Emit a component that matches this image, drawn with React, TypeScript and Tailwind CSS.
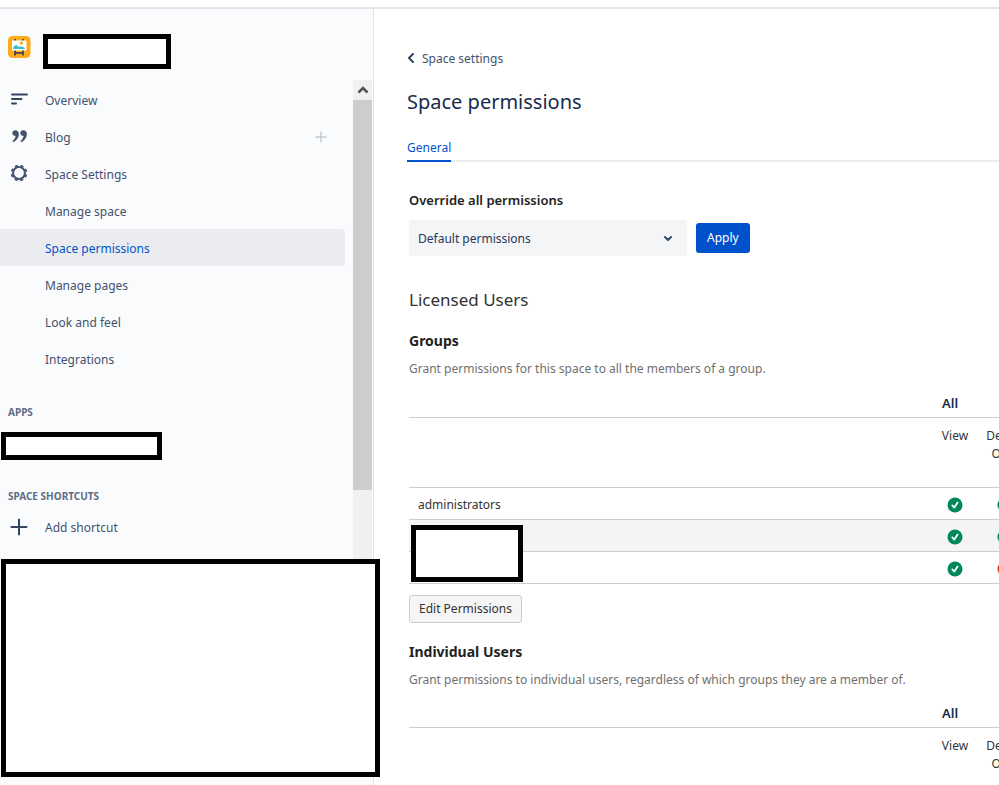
import type { ReactNode } from "react";

const ALL_PERMISSIONS = ["View", "Delete Own"];

type Group = { name: string; grants: boolean[] };

const GROUPS: Group[] = [
  { name: "administrators", grants: [true, true] },
  { name: "", grants: [true, true] },
  { name: "", grants: [true, false] },
];

const SETTINGS_LINKS = [
  { label: "Manage space", active: false },
  { label: "Space permissions", active: true },
  { label: "Manage pages", active: false },
  { label: "Look and feel", active: false },
  { label: "Integrations", active: false },
];

function SpaceLogo() {
  return (
    <svg viewBox="0 0 24 24" className="size-6 shrink-0" aria-hidden="true">
      <rect x="1" y="0" width="22.500" height="22" rx="4.500" fill="#ffab1a" />
      <path d="M8 3v3M16 3v3M8 14v5.500M16 14v5.500M8 17h8" stroke="#253858" strokeWidth="1.500" />
      <rect x="5" y="4.500" width="14.500" height="10" rx="0.500" fill="#fff" />
      <path d="M6 13c0-2 1.500-3.500 3-4 1.200.2 2 1 2.500 2 1-.8 2-1 3-.3 1.500-.2 3 .5 3.500 2.300z" fill="#3cc0c9" />
      <circle cx="14.500" cy="7" r="1.500" fill="#ff991f" />
    </svg>
  );
}

function OverviewIcon() {
  return (
    <svg viewBox="0 0 18 18" className="size-[18px]" fill="none" stroke="#344563" strokeWidth="2" strokeLinecap="round" aria-hidden="true">
      <path d="M2 3.500h15M2 8h9.500M2 12.500h4" />
    </svg>
  );
}

function QuoteIcon() {
  return (
    <svg viewBox="0 0 18 18" className="size-[18px]" fill="#42526e" aria-hidden="true">
      <path d="M5.300 2.300C3.400 2.300 2.300 3.500 2.300 5.100s1.100 2.800 2.600 2.800c.3 0 .5 0 .7-.1-.2 2-1.200 3.700-2.900 5-.6.600.2 1.500.9 1.100C7 12.300 8.900 9.500 8.900 6.100 8.900 3.700 7.300 2.300 5.300 2.300z" />
      <path d="M13.300 2.300c-1.900 0-3 1.200-3 2.800s1.100 2.800 2.600 2.800c.3 0 .5 0 .7-.1-.2 2-1.200 3.700-2.900 5-.6.600.2 1.500.9 1.100C15 12.300 16.900 9.500 16.900 6.100 16.900 3.700 15.300 2.300 13.300 2.300z" />
    </svg>
  );
}

function GearIcon() {
  return (
    <svg viewBox="0 1 18 18" className="size-[18px]" fill="none" stroke="#42526e" aria-hidden="true">
      <circle cx="9" cy="9" r="5.900" strokeWidth="2" />
      <circle cx="9" cy="9" r="7.400" strokeWidth="1.800" strokeDasharray="3.100 2.712" strokeDashoffset="-1.360" />
    </svg>
  );
}

function PlusIcon({ className }: { className: string }) {
  return (
    <svg viewBox="0 0 18 18" className={className} fill="none" stroke="currentColor" strokeWidth="2" strokeLinecap="round" aria-hidden="true">
      <path d="M9 1.500v15M1.500 9h15" />
    </svg>
  );
}

function StatusIcon({ granted }: { granted: boolean }) {
  return (
    <svg viewBox="0 0 16 16" className="mx-auto block size-4" role="img" aria-label={granted ? "Granted" : "Denied"}>
      <circle cx="8" cy="8" r="7.500" fill={granted ? "#00875a" : "#de350b"} />
      <path
        d={granted ? "M5.300 8.400l2 2.200 3.300-5" : "M5.500 5.500l5 5M10.500 5.500l-5 5"}
        fill="none"
        stroke="#fff"
        strokeWidth="1.800"
        strokeLinecap="round"
        strokeLinejoin="round"
      />
    </svg>
  );
}

function NavItem({ icon, label, active = false, action }: { icon?: ReactNode; label: string; active?: boolean; action?: ReactNode }) {
  return (
    <li className={active ? "flex h-[37px] items-center rounded-r-[3px] bg-[#ebecf0] pr-4" : "flex h-[37px] items-center pr-4"}>
      <a href="#" className={active ? "flex flex-1 items-center text-[#0052cc]" : "flex flex-1 items-center text-[#42526e]"}>
        <span className="w-[45px] pl-[10px]">{icon}</span>
        <span className="pt-[2px]">{label}</span>
      </a>
      {action}
    </li>
  );
}

function Scrollbar() {
  return (
    <div className="mr-px flex w-[19px] shrink-0 flex-col bg-[#f0f0f0]" aria-hidden="true">
      <div className="flex h-5 items-center justify-center">
        <svg viewBox="0 0 12 8" className="h-2 w-3" fill="none" stroke="#505050" strokeWidth="2.500">
          <path d="M1.500 6.500L6 2l4.500 4.500" />
        </svg>
      </div>
      <div className="h-[390px] bg-[#cdcdcd]" />
    </div>
  );
}

function Sidebar() {
  return (
    <aside className="relative flex w-[374px] shrink-0 flex-col border-r border-[#e3e4e8] bg-[#fafbfd]">
      <header className="flex h-[71px] shrink-0 gap-3 pt-[25px] pl-[7px]">
        <span className="pt-[2px]">
          <SpaceLogo />
        </span>
        <div className="h-[35px] w-[128px] border-5 border-black bg-white" />
      </header>
      <div className="flex min-h-0 flex-1 pb-5">
        <nav className="mr-2 flex-1 text-[12px]" aria-label="Space">
          <ul className="pt-px">
            <NavItem icon={<OverviewIcon />} label="Overview" />
            <NavItem
              icon={<QuoteIcon />}
              label="Blog"
              action={
                <button type="button" aria-label="Create blog post" className="p-[2px] text-[#c1c7d0]">
                  <PlusIcon className="size-3" />
                </button>
              }
            />
            <NavItem icon={<GearIcon />} label="Space Settings" />
            {SETTINGS_LINKS.map((link) => (
              <NavItem key={link.label} label={link.label} active={link.active} />
            ))}
          </ul>
          <h2 className="mt-[27px] pl-2 text-[10px] leading-4 font-bold text-[#5e6c84]">APPS</h2>
          <div className="mt-3 ml-px h-7 w-[161px] border-5 border-black bg-white" />
          <h2 className="mt-7 pl-2 text-[10px] leading-4 font-bold text-[#5e6c84]">SPACE SHORTCUTS</h2>
          <ul className="mt-1">
            <NavItem icon={<PlusIcon className="size-[18px] text-[#344563]" />} label="Add shortcut" />
          </ul>
        </nav>
        <Scrollbar />
      </div>
      <div className="absolute top-[550px] left-px z-10 h-[218px] w-[379px] border-5 border-black bg-white" />
    </aside>
  );
}

function PermissionTable({ label, groups }: { label: string; groups: Group[] }) {
  return (
    <table className="w-[622px] table-fixed border-collapse text-[12px] leading-[18px] text-[#333]" aria-label={label}>
      <colgroup>
        <col className="w-[523px]" />
        <col className="w-[46px]" />
        <col className="w-[53px]" />
      </colgroup>
      <thead>
        <tr className="h-[30px] border-b border-[#ccc]">
          <td />
          <th colSpan={2} scope="colgroup" className="pt-[2px] pl-[10px] text-left text-[13px] font-semibold text-[#172b4d]">
            All
          </th>
        </tr>
        <tr className="h-[70px] border-b border-[#ccc] align-top">
          <td />
          {ALL_PERMISSIONS.map((permission) => (
            <th key={permission} scope="col" className="pt-[9px] text-center font-normal">
              {permission}
            </th>
          ))}
        </tr>
      </thead>
      <tbody>
        {groups.map((group, index) => (
          <tr key={index} className="h-[32px] border-b border-[#ccc] even:bg-[#f4f4f4]">
            <td className="pt-[3px] pl-[9px]">{group.name}</td>
            {group.grants.map((granted, column) => (
              <td key={column} className="pt-1">
                <StatusIcon granted={granted} />
              </td>
            ))}
          </tr>
        ))}
      </tbody>
    </table>
  );
}

export default function App() {
  return (
    <div className="flex h-screen flex-col overflow-hidden bg-white font-['Noto_Sans',sans-serif] text-[12px]">
      <div className="z-10 h-[9px] shrink-0 border-b-2 border-[#e3e5ea] bg-white" />
      <div className="flex min-h-0 flex-1">
        <Sidebar />
        <main className="min-w-0 flex-1 overflow-hidden pt-[41px] pl-[33px]">
          <a href="#" className="flex items-center gap-[6px] leading-[18px] text-[#42526e]">
            <svg viewBox="0 0 9 12" className="h-3 w-[9px]" fill="none" stroke="#344563" strokeWidth="2" strokeLinecap="round" strokeLinejoin="round" aria-hidden="true">
              <path d="M6 1L2 5l4 4" />
            </svg>
            Space settings
          </a>
          <h1 className="mt-5 text-[20px] leading-7 text-[#172b4d]">Space permissions</h1>
          <div className="mt-5 flex border-b-2 border-[#ebecf0]" role="tablist">
            <button type="button" role="tab" aria-selected="true" className="-mb-[2px] h-[26px] border-b-2 border-[#0052cc] pb-px leading-[18px] text-[#0052cc]">
              General
            </button>
          </div>
          <div className="pl-[2px]">
            <label htmlFor="override" className="mt-[29px] block text-[13px] leading-[18px] font-semibold text-[#222]">
              Override all permissions
            </label>
            <div className="mt-[11px] flex items-center gap-[9px]">
              <div className="relative">
                <select id="override" className="block h-9 w-[278px] appearance-none rounded-[3px] bg-[#f4f5f7] pt-[2px] pl-[9px] text-[#253858]">
                  <option>Default permissions</option>
                </select>
                <svg viewBox="0 0 10 8" className="pointer-events-none absolute top-[15px] right-[14px] h-2 w-[10px]" fill="none" stroke="#344563" strokeWidth="2" strokeLinecap="round" strokeLinejoin="round" aria-hidden="true">
                  <path d="M2 2l3 3 3-3" />
                </svg>
              </div>
              <button type="button" className="h-[30px] rounded-[3px] bg-[#0052cc] px-[11px] text-white">
                Apply
              </button>
            </div>
            <h2 className="mt-8 text-[17px] leading-6 text-[#333]">Licensed Users</h2>

            <h3 className="mt-[19px] text-[14px] leading-5 font-bold text-[#222]">Groups</h3>
            <p className="my-[9px] leading-[18px] text-[#707070]">Grant permissions for this space to all the members of a group.</p>
            <div className="relative">
              <PermissionTable label="Group permissions" groups={GROUPS} />
              <div className="absolute top-[138px] left-[2px] h-[57px] w-[112px] border-5 border-black bg-white" />
            </div>
            <button type="button" className="mt-[11px] h-7 rounded-[3px] border border-[#ccc] bg-[#f5f5f5] px-[9px] text-[#333]">
              Edit Permissions
            </button>

            <h3 className="mt-[19px] text-[14px] leading-5 font-bold text-[#222]">Individual Users</h3>
            <p className="my-[9px] leading-[18px] text-[#707070]">Grant permissions to individual users, regardless of which groups they are a member of.</p>
            <PermissionTable label="Individual user permissions" groups={[]} />
          </div>
        </main>
      </div>
    </div>
  );
}
